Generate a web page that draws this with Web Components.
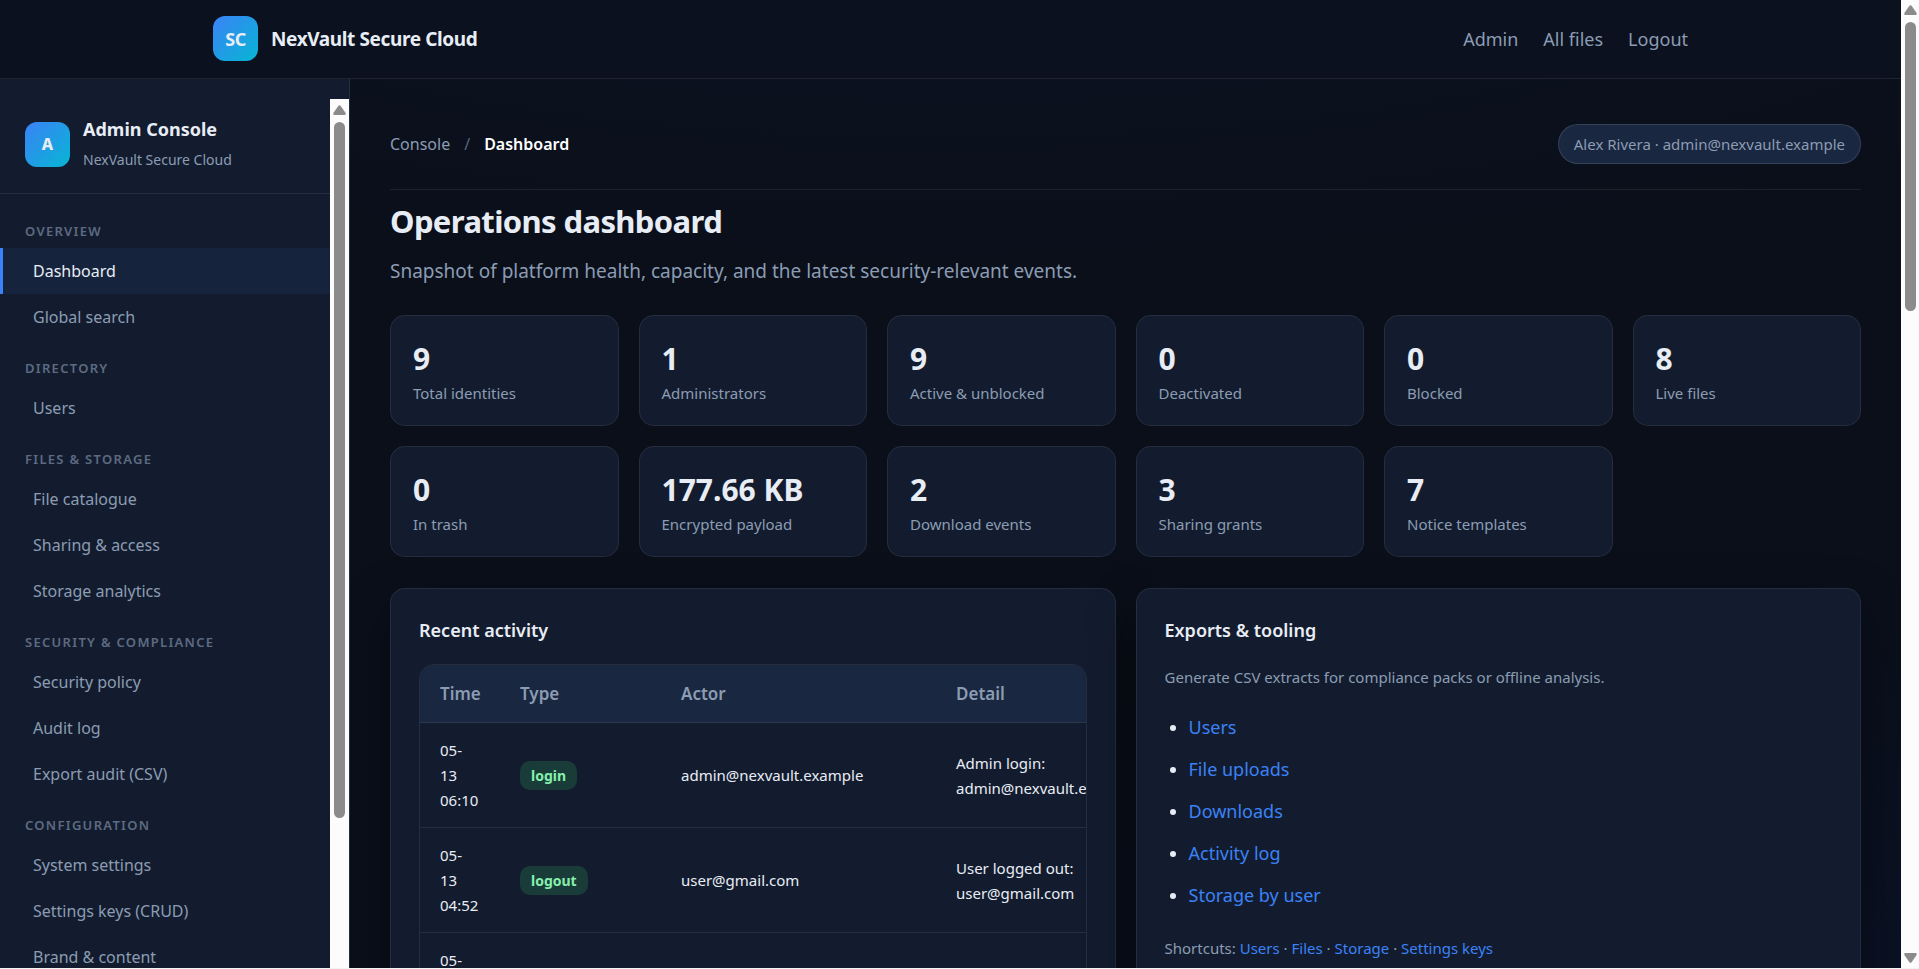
<!DOCTYPE html>
<html lang="en">
<head>
<meta charset="utf-8">
<title>Dashboard · NexVault Secure Cloud</title>
<style>
  :root {
    --bg: #0a0f1a;
    --header-bg: #0b111e;
    --surface: #131c2e;
    --elevated: #1a2740;
    --border: rgba(255, 255, 255, 0.08);
    --text: #e8edf5;
    --muted: #8b9cb3;
    --dim: #5d6b82;
    --accent: #3b82f6;
    --brand-gradient: linear-gradient(135deg, #3b82f6, #06b6d4);
    --radius: 15px;
  }
  body {
    margin: 0;
    background: var(--bg);
    color: var(--text);
    font: 18px/30px "Noto Sans", "Open Sans", sans-serif;
    overflow: hidden;
  }
</style>
</head>
<body>

<nv-app>
  <nv-header slot="header" brand="NexVault Secure Cloud" initials="SC">
    <a href="#admin">Admin</a>
    <a href="#files">All files</a>
    <a href="#logout">Logout</a>
  </nv-header>

  <nv-sidebar slot="sidebar" heading="Admin Console" sub="NexVault Secure Cloud" initials="A">
    <nv-nav-group label="Overview">
      <nv-nav-item href="#dashboard" active>Dashboard</nv-nav-item>
      <nv-nav-item href="#search">Global search</nv-nav-item>
    </nv-nav-group>
    <nv-nav-group label="Directory">
      <nv-nav-item href="#users">Users</nv-nav-item>
    </nv-nav-group>
    <nv-nav-group label="Files &amp; storage">
      <nv-nav-item href="#catalogue">File catalogue</nv-nav-item>
      <nv-nav-item href="#sharing">Sharing &amp; access</nv-nav-item>
      <nv-nav-item href="#storage">Storage analytics</nv-nav-item>
    </nv-nav-group>
    <nv-nav-group label="Security &amp; compliance">
      <nv-nav-item href="#policy">Security policy</nv-nav-item>
      <nv-nav-item href="#audit">Audit log</nv-nav-item>
      <nv-nav-item href="#export">Export audit (CSV)</nv-nav-item>
    </nv-nav-group>
    <nv-nav-group label="Configuration">
      <nv-nav-item href="#system">System settings</nv-nav-item>
      <nv-nav-item href="#keys">Settings keys (CRUD)</nv-nav-item>
      <nv-nav-item href="#brand">Brand &amp; content</nv-nav-item>
    </nv-nav-group>
  </nv-sidebar>

  <nv-topbar parent="Console" current="Dashboard">Alex Rivera · admin@nexvault.example</nv-topbar>
  <nv-page-title heading="Operations dashboard">Snapshot of platform health, capacity, and the latest security-relevant events.</nv-page-title>

  <nv-stats>
    <nv-stat value="9">Total identities</nv-stat>
    <nv-stat value="1">Administrators</nv-stat>
    <nv-stat value="9">Active &amp; unblocked</nv-stat>
    <nv-stat value="0">Deactivated</nv-stat>
    <nv-stat value="0">Blocked</nv-stat>
    <nv-stat value="8">Live files</nv-stat>
    <nv-stat value="0">In trash</nv-stat>
    <nv-stat value="177.66 KB">Encrypted payload</nv-stat>
    <nv-stat value="2">Download events</nv-stat>
    <nv-stat value="3">Sharing grants</nv-stat>
    <nv-stat value="7">Notice templates</nv-stat>
  </nv-stats>

  <nv-panels>
    <nv-panel heading="Recent activity">
      <nv-activity-table></nv-activity-table>
    </nv-panel>
    <nv-panel heading="Exports &amp; tooling">
      <nv-exports></nv-exports>
    </nv-panel>
  </nv-panels>
</nv-app>

<script>
// Base class: every element renders once from its attributes.
class NvElement extends HTMLElement {
  constructor() {
    super();
    this.attachShadow({ mode: "open" });
  }

  connectedCallback() {
    this.shadowRoot.innerHTML = `<style>${this.styles()}</style>${this.markup()}`;
  }

  attr(name) {
    return (this.getAttribute(name) || "").replace(/&/g, "&amp;");
  }
}

class NvApp extends NvElement {
  styles() {
    return `
      :host {
        display: grid;
        grid-template-columns: minmax(0, 1fr) 18px;
        height: 100vh;
        box-sizing: border-box;
        border-bottom: 1px solid #f3f3f3;
        overflow: hidden;
      }
      .page {
        display: grid;
        grid-template-columns: 350px minmax(0, 1fr);
        grid-template-rows: auto minmax(0, 1fr);
        min-height: 0;
        background:
          radial-gradient(ellipse 80% 50% at 50% -20%, rgba(59, 130, 246, 0.04), transparent),
          radial-gradient(ellipse 60% 40% at 100% 100%, rgba(6, 60, 212, 0.05), transparent),
          var(--bg);
      }
      .header { grid-column: 1 / -1; }
      main {
        padding: 45px 40px 0;
        overflow: hidden;
      }
    `;
  }

  markup() {
    return `
      <div class="page">
        <div class="header"><slot name="header"></slot></div>
        <slot name="sidebar"></slot>
        <main><slot></slot></main>
      </div>
      <nv-scrollbar style="--thumb: 289px" down></nv-scrollbar>
    `;
  }
}

class NvScrollbar extends NvElement {
  styles() {
    return `
      :host {
        display: flex;
        flex-direction: column;
        align-items: center;
        background: #fcfcfc;
        overflow: hidden;
      }
      svg { display: block; width: 13px; height: 10px; flex: none; fill: #8b8b8b; }
      .up { margin: 5px 0 7px; }
      .down { margin: auto 0 5px; }
      .thumb {
        flex: none;
        width: 11px;
        height: var(--thumb);
        border-radius: 6px;
        background: #8b8b8b;
      }
    `;
  }

  markup() {
    return `
      <svg class="up" viewBox="0 0 13 10" aria-hidden="true"><path d="M5.4.8Q6.5-.4 7.6.8L12.6 8Q13.2 10 11.5 10H1.5Q-.2 10 .4 8Z"/></svg>
      <div class="thumb"></div>
      ${
        this.hasAttribute("down")
          ? `<svg class="down" viewBox="0 0 13 10" aria-hidden="true"><path d="M5.4 9.2Q6.5 10.4 7.6 9.2L12.6 2Q13.2 0 11.5 0H1.5Q-.2 0 .4 2Z"/></svg>`
          : ""
      }
    `;
  }
}

class NvLogo extends NvElement {
  styles() {
    return `
      :host {
        display: flex;
        align-items: center;
        justify-content: center;
        flex: none;
        width: 45px;
        height: 45px;
        border-radius: 12px;
        background: var(--brand-gradient);
        font-weight: 700;
      }
    `;
  }

  markup() {
    return `<slot></slot>`;
  }
}

class NvHeader extends NvElement {
  styles() {
    return `
      :host {
        display: block;
        padding: 16px 30px 17px;
        background: var(--header-bg);
        border-bottom: 1px solid var(--border);
      }
      .inner {
        display: flex;
        align-items: center;
        justify-content: space-between;
        max-width: 1475px;
        margin: 0 auto;
      }
      .brand {
        display: flex;
        align-items: center;
        gap: 13px;
        color: var(--text);
        font-size: 19px;
        font-weight: 700;
        letter-spacing: -0.02em;
        text-decoration: none;
      }
      nv-logo { font-size: 18px; }
      nav { display: flex; gap: 25px; }
      ::slotted(a) { color: var(--muted); text-decoration: none; }
    `;
  }

  markup() {
    return `
      <div class="inner">
        <a class="brand" href="#home"><nv-logo>${this.attr("initials")}</nv-logo><span>${this.attr("brand")}</span></a>
        <nav><slot></slot></nav>
      </div>
    `;
  }
}

class NvSidebar extends NvElement {
  styles() {
    return `
      :host {
        display: flex;
        min-height: 0;
        padding-top: 20px;
        background: var(--surface);
        border-right: 1px solid var(--border);
        overflow: hidden;
      }
      .scroll { flex: 1; min-width: 0; overflow: hidden; }
      nv-scrollbar { width: 19px; flex: none; padding-top: 1px; }
      .brand {
        display: flex;
        align-items: center;
        gap: 13px;
        padding: 14px 25px 18px;
        border-bottom: 1px solid var(--border);
        margin-bottom: 9px;
      }
      nv-logo { font-size: 16px; font-weight: 800; }
      .name { font-size: 18px; line-height: 32px; font-weight: 700; }
      .sub { font-size: 14px; line-height: 30px; color: var(--muted); }
    `;
  }

  markup() {
    return `
      <div class="scroll">
        <div class="brand">
          <nv-logo>${this.attr("initials")}</nv-logo>
          <div>
            <div class="name">${this.attr("heading")}</div>
            <div class="sub">${this.attr("sub")}</div>
          </div>
        </div>
        <nav><slot></slot></nav>
      </div>
      <nv-scrollbar style="--thumb: 696px"></nv-scrollbar>
    `;
  }
}

class NvNavGroup extends NvElement {
  styles() {
    return `
      :host { display: block; }
      .label {
        padding: 17px 25px 6px;
        color: var(--dim);
        font-size: 13px;
        line-height: 22px;
        font-weight: 600;
        letter-spacing: 0.1em;
        text-transform: uppercase;
      }
    `;
  }

  markup() {
    return `<div class="label">${this.attr("label")}</div><slot></slot>`;
  }
}

class NvNavItem extends NvElement {
  styles() {
    return `
      :host { display: block; }
      a {
        display: block;
        padding: 8px 25px 8px 30px;
        border-left: 3px solid transparent;
        color: var(--muted);
        font-size: 16px;
        line-height: 30px;
        text-decoration: none;
      }
      :host([active]) a {
        background: rgba(59, 130, 246, 0.08);
        border-left-color: var(--accent);
        color: var(--text);
      }
    `;
  }

  markup() {
    return `<a href="${this.attr("href")}"><slot></slot></a>`;
  }
}

class NvTopbar extends NvElement {
  styles() {
    return `
      :host {
        display: flex;
        align-items: center;
        justify-content: space-between;
        padding-bottom: 25px;
        border-bottom: 1px solid var(--border);
      }
      nav { display: flex; gap: 14px; font-size: 16px; color: var(--muted); }
      a { color: inherit; text-decoration: none; }
      .sep { opacity: 0.6; }
      .current { color: #fff; font-weight: 600; }
      .user {
        padding: 5px 15px;
        border: 1px solid rgba(255, 255, 255, 0.12);
        border-radius: 20px;
        background: var(--elevated);
        color: var(--muted);
        font-size: 15px;
        line-height: 28px;
      }
    `;
  }

  markup() {
    return `
      <nav aria-label="Breadcrumb">
        <a href="#console">${this.attr("parent")}</a>
        <span class="sep">/</span>
        <span class="current">${this.attr("current")}</span>
      </nav>
      <div class="user"><slot></slot></div>
    `;
  }
}

class NvPageTitle extends NvElement {
  styles() {
    return `
      :host { display: block; margin-bottom: 28px; }
      h1 {
        margin: 9px 0 13px;
        font-size: 31px;
        line-height: 44px;
        font-weight: 700;
        letter-spacing: -0.02em;
      }
      p { margin: 0; color: var(--muted); font-size: 19px; line-height: 31px; }
    `;
  }

  markup() {
    return `<h1>${this.attr("heading")}</h1><p><slot></slot></p>`;
  }
}

class NvStats extends NvElement {
  styles() {
    return `
      :host {
        display: grid;
        grid-template-columns: repeat(auto-fill, minmax(200px, 1fr));
        gap: 20px;
        margin-bottom: 31px;
      }
    `;
  }

  markup() {
    return `<slot></slot>`;
  }
}

class NvStat extends NvElement {
  styles() {
    return `
      :host {
        display: block;
        padding: 23px 22px 17px;
        border: 1px solid var(--border);
        border-radius: var(--radius);
        background: var(--surface);
      }
      .value { font-size: 30px; line-height: 39px; font-weight: 700; }
      .label { color: var(--muted); font-size: 15px; line-height: 30px; }
    `;
  }

  markup() {
    return `
      <div class="value">${this.attr("value")}</div>
      <div class="label"><slot></slot></div>
    `;
  }
}

class NvPanels extends NvElement {
  styles() {
    return `
      :host {
        display: grid;
        grid-template-columns: repeat(2, minmax(0, 1fr));
        gap: 20px;
      }
    `;
  }

  markup() {
    return `<slot></slot>`;
  }
}

class NvPanel extends NvElement {
  styles() {
    return `
      :host {
        display: block;
        padding: 28px;
        border: 1px solid var(--border);
        border-radius: var(--radius);
        background: var(--surface);
        box-shadow: 0 20px 50px rgba(0, 0, 0, 0.4);
      }
      h2 { margin: 0 0 21px; font-size: 18px; line-height: 26px; font-weight: 600; }
    `;
  }

  markup() {
    return `<h2>${this.attr("heading")}</h2><slot></slot>`;
  }
}

const ACTIVITY = [
  { time: ["05-", "13", "06:10"], type: "login", actor: "admin@nexvault.example", detail: "Admin login: admin@nexvault.example" },
  { time: ["05-", "13", "04:52"], type: "logout", actor: "user@gmail.com", detail: "User logged out: user@gmail.com" },
  { time: ["05-", "13", "04:51"], type: "login", actor: "user@gmail.com", detail: "User logged in: user@gmail.com" },
];

class NvActivityTable extends NvElement {
  styles() {
    return `
      :host {
        display: block;
        border: 1px solid var(--border);
        border-radius: var(--radius);
        overflow: hidden;
      }
      table {
        width: 720px;
        table-layout: fixed;
        border-collapse: separate;
        border-spacing: 0;
        text-align: left;
      }
      .time { width: 80px; }
      .type { width: 161px; }
      .actor { width: 275px; }
      th, td {
        box-sizing: border-box;
        padding: 14px 20px;
        border-bottom: 1px solid var(--border);
      }
      th {
        background: var(--elevated);
        color: var(--muted);
        font-size: 17px;
        line-height: 29px;
        font-weight: 600;
      }
      td { padding: 15px 20px 14px; font-size: 15px; line-height: 25px; }
      th:first-child, td:first-child { padding-right: 0; }
      td:last-child { padding-right: 0; }
      .badge {
        display: inline-block;
        padding: 2px 11px;
        border-radius: 10px;
        background: #193c39;
        color: #86efac;
        font-size: 14px;
        font-weight: 700;
      }
    `;
  }

  markup() {
    const rows = ACTIVITY.map(
      (r) => `
        <tr>
          <td>${r.time.join("<br>")}</td>
          <td><span class="badge">${r.type}</span></td>
          <td>${r.actor}</td>
          <td>${r.detail}</td>
        </tr>`
    ).join("");
    return `
      <table>
        <thead>
          <tr>
            <th class="time">Time</th>
            <th class="type">Type</th>
            <th class="actor">Actor</th>
            <th>Detail</th>
          </tr>
        </thead>
        <tbody>${rows}</tbody>
      </table>
    `;
  }
}

class NvExports extends NvElement {
  styles() {
    return `
      :host { display: block; }
      a { color: var(--accent); text-decoration: none; }
      p { margin: 0; color: var(--muted); font-size: 15px; line-height: 26px; }
      ul {
        margin: 16px 0 19px;
        padding-left: 24px;
        font-size: 18px;
        line-height: 42px;
      }
    `;
  }

  markup() {
    const exports = ["Users", "File uploads", "Downloads", "Activity log", "Storage by user"];
    const shortcuts = ["Users", "Files", "Storage", "Settings keys"];
    return `
      <p>Generate CSV extracts for compliance packs or offline analysis.</p>
      <ul>${exports.map((e) => `<li><a href="#export">${e}</a></li>`).join("")}</ul>
      <p>Shortcuts: ${shortcuts.map((s) => `<a href="#go">${s}</a>`).join(" · ")}</p>
    `;
  }
}

customElements.define("nv-app", NvApp);
customElements.define("nv-scrollbar", NvScrollbar);
customElements.define("nv-logo", NvLogo);
customElements.define("nv-header", NvHeader);
customElements.define("nv-sidebar", NvSidebar);
customElements.define("nv-nav-group", NvNavGroup);
customElements.define("nv-nav-item", NvNavItem);
customElements.define("nv-topbar", NvTopbar);
customElements.define("nv-page-title", NvPageTitle);
customElements.define("nv-stats", NvStats);
customElements.define("nv-stat", NvStat);
customElements.define("nv-panels", NvPanels);
customElements.define("nv-panel", NvPanel);
customElements.define("nv-activity-table", NvActivityTable);
customElements.define("nv-exports", NvExports);
</script>
</body>
</html>
